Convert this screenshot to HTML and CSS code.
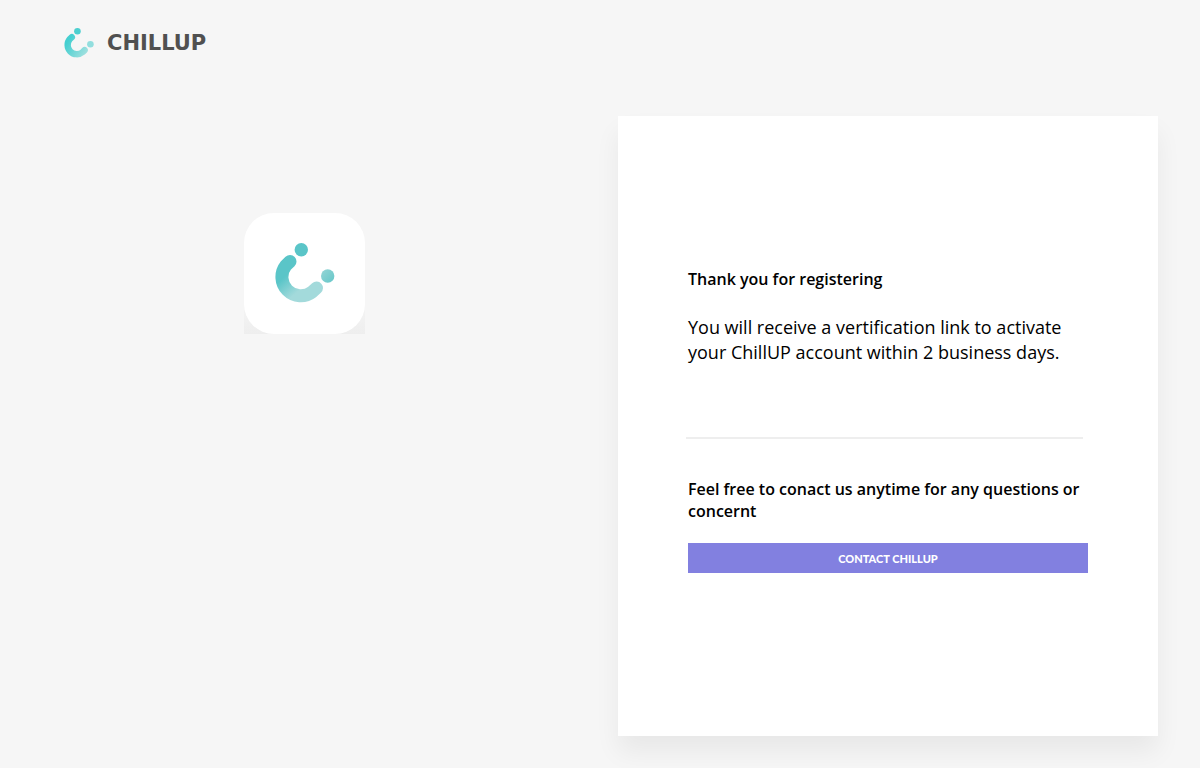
FILE: index.html
```html
<!DOCTYPE html>
<html lang="en">
<head>
<meta charset="utf-8">
<meta name="viewport" content="width=device-width, initial-scale=1">
<title>ChillUP - Thank you for registering</title>
<link rel="stylesheet" href="styles.css">
</head>
<body>
<header class="header">
  <a class="brand" href="#">
    <svg class="brand-mark" viewBox="30 30 61 61" aria-hidden="true">
      <defs>
        <linearGradient id="brand-arc" gradientUnits="userSpaceOnUse" x1="36" y1="60" x2="74" y2="84">
          <stop offset="0" stop-color="#45cfd0"/>
          <stop offset="1" stop-color="#a0e0df"/>
        </linearGradient>
      </defs>
      <path d="M46 48.5 42 52.3A18.7 18.7 0 0 0 68 79L72 75" fill="none" stroke="url(#brand-arc)" stroke-width="13" stroke-linecap="round"/>
      <circle cx="57.3" cy="36.7" r="6.7" fill="#4dcfcf"/>
      <circle cx="83.7" cy="63" r="6.7" fill="#92dede"/>
    </svg>
    <span class="brand-name">CHILLUP</span>
  </a>
</header>
<main class="page">
  <section class="intro">
    <div class="app-tile">
      <svg class="app-icon" viewBox="0 0 121 121" role="img" aria-label="ChillUP app">
        <defs>
          <linearGradient id="tile-arc" gradientUnits="userSpaceOnUse" x1="37" y1="67" x2="50" y2="82">
            <stop offset="0" stop-color="#5ac5c8"/>
            <stop offset="1" stop-color="#a3dadb"/>
          </linearGradient>
          <linearGradient id="tile-dot" x1="0" y1="0" x2="1" y2="1">
            <stop offset="0" stop-color="#95d5d5"/>
            <stop offset="1" stop-color="#65c7c9"/>
          </linearGradient>
        </defs>
        <path d="M46 48.5 42 52.3A18.8 18.8 0 0 0 68.3 78.8L72.5 75" fill="none" stroke="url(#tile-arc)" stroke-width="13" stroke-linecap="round"/>
        <circle cx="57.3" cy="36.7" r="6.7" fill="#5ac5c8"/>
        <circle cx="83.7" cy="63" r="6.7" fill="url(#tile-dot)"/>
      </svg>
    </div>
  </section>
  <section class="card">
    <h1 class="title">Thank you for registering</h1>
    <p class="message">You will receive a vertification link to activate your ChillUP account within 2 business days.</p>
    <hr class="divider">
    <h2 class="title">Feel free to conact us anytime for any questions or concernt</h2>
    <button class="contact" type="button">CONTACT CHILLUP</button>
  </section>
</main>
</body>
</html>
```
FILE: styles.css
```css
* {
  box-sizing: border-box;
}

body {
  margin: 0;
  background: #f6f6f6;
  color: #000;
  font-family: "Open Sans", "Noto Sans", sans-serif;
}

.header {
  display: flex;
  padding: 28px 64px 0;
}

.brand {
  display: flex;
  align-items: center;
  gap: 13px;
  color: #505050;
  text-decoration: none;
}

.brand-mark {
  width: 30px;
  height: 30px;
}

.brand-name {
  font-family: "DejaVu Sans", sans-serif;
  font-size: 21px;
  font-weight: 700;
  line-height: 26px;
}

.page {
  display: grid;
  grid-template-columns: 1fr minmax(0, 540px);
  gap: 9px;
  padding: 58px 42px 32px 0;
}

.intro {
  display: flex;
  justify-content: center;
  align-items: flex-start;
  padding-top: 97px;
}

.app-tile {
  width: 121px;
  background: linear-gradient(#f6f6f6 70%, #eee);
}

.app-icon {
  display: block;
  border-radius: 30px;
  background: #fff;
}

.card {
  display: flex;
  flex-direction: column;
  justify-content: center;
  min-height: 620px;
  padding: 70px 70px 81px;
  background: #fff;
  box-shadow: 0 16px 24px rgba(0, 0, 0, 0.06);
}

.title {
  margin: 0;
  font-size: 16px;
  font-weight: 600;
  line-height: 22px;
}

.message {
  margin: 25px 0 72px;
  padding-right: 20px;
  font-size: 18px;
  line-height: 25px;
}

.divider {
  width: 397px;
  max-width: 100%;
  height: 2px;
  margin: 0 0 39px -2px;
  border: 0;
  background: #eee;
}

.contact {
  height: 30px;
  margin-top: 21px;
  border: 0;
  background: #8280e0;
  color: #fff;
  font-family: Lato, sans-serif;
  font-size: 11px;
  font-weight: 900;
  cursor: pointer;
}
```
